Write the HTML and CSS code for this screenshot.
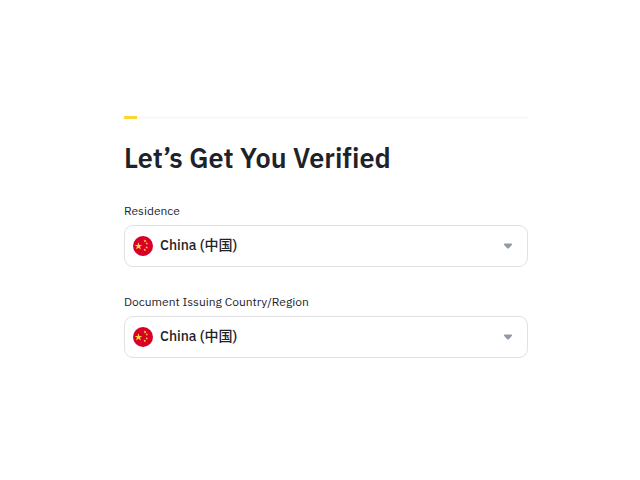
FILE: index.html
```
<!DOCTYPE html>
<html lang="en">
  <head>
    <meta charset="UTF-8" />
    <meta name="viewport" content="width=device-width, initial-scale=1" />
    <title>Let’s Get You Verified</title>
    <link rel="stylesheet" href="styles.css" />
  </head>
  <body>
    <!-- Flag, shared by both fields -->
    <svg class="sprite" width="0" height="0" aria-hidden="true">
      <symbol id="flag-cn" viewBox="0 0 20 20">
        <circle cx="10" cy="10" r="10" fill="#d80027" />
        <path fill="#ffda44" d="M5.500 6.200l.9 2.700h2.900L7 10.600l.9 2.800-2.400-1.700-2.400 1.700.9-2.800L1.700 8.900h2.900z" />
        <path fill="#ffda44" d="M11.200 15.100l-.1-1-.9-.4 1-.3.100-1 .6.800 1-.3-.5.900.6.800-1-.2zM12.900 12.500l.3-1-.8-.6h1l.3-1 .4 1h1l-.8.6.3 1-.9-.6zM14.800 8.400l-.9-.5-.8.700.2-1-.9-.5 1-.1.200-1 .5.900 1-.1-.7.7zM12.300 5.700l-.7.7-.1-1-.9-.4.9-.4.1-1 .7.700.9-.3-.4.900.500.900z" />
      </symbol>
    </svg>

    <main class="verify">
      <div class="progress" role="progressbar" aria-label="Progress" aria-valuemin="0" aria-valuemax="100" aria-valuenow="3">
        <div class="progress-bar"></div>
      </div>

      <h1>Let’s Get You Verified</h1>

      <form class="verify-form">
        <div class="field">
          <label for="residence">Residence</label>
          <div class="select-box">
            <svg class="flag" aria-hidden="true"><use href="#flag-cn" /></svg>
            <select id="residence" name="residence">
              <option value="CN" selected>China (中国)</option>
            </select>
            <svg class="arrow" viewBox="0 0 8 6" aria-hidden="true">
              <path d="M.6.5h6.800q.6 0 .6.600v.7L4.900 5.200q-.9.8-1.800 0L0 1.800v-.7Q0 .5.600.5z" />
            </svg>
          </div>
        </div>

        <div class="field">
          <label for="issuing-country">Document Issuing Country/Region</label>
          <div class="select-box">
            <svg class="flag" aria-hidden="true"><use href="#flag-cn" /></svg>
            <select id="issuing-country" name="issuing-country">
              <option value="CN" selected>China (中国)</option>
            </select>
            <svg class="arrow" viewBox="0 0 8 6" aria-hidden="true">
              <path d="M.6.5h6.800q.6 0 .6.600v.7L4.900 5.200q-.9.8-1.800 0L0 1.800v-.7Q0 .5.600.5z" />
            </svg>
          </div>
        </div>
      </form>
    </main>
  </body>
</html>
```
FILE: styles.css
```
/* Reset */
* {
  margin: 0;
  padding: 0;
  box-sizing: border-box;
}
body {
  background-color: #fff;
  color: #1e2329;
  font-family: "IBM Plex Sans", Roboto, "Noto Sans CJK SC", sans-serif;
}
.sprite {
  position: absolute;
}

.verify {
  padding: 116px 112px 40px 124px;
}

/* Progress */
.progress {
  height: 3px;
  background-color: #fafafa;
}
.progress-bar {
  width: 13px;
  height: 100%;
  background-color: #fcd535;
}

h1 {
  margin-top: 21px;
  font-size: 27px;
  line-height: 36px;
  font-weight: 600;
  font-variant-ligatures: none;
}

/* Fields */
.verify-form {
  display: flex;
  flex-direction: column;
  gap: 27px;
  margin-top: 27px;
}
.field {
  display: flex;
  flex-direction: column;
  gap: 6px;
}
label {
  font-size: 12px;
  line-height: 16px;
}
.select-box {
  display: flex;
  align-items: center;
  height: 42px;
  border: 1px solid #dfe1e6;
  border-radius: 9px;
}
.select-box:focus-within {
  border-color: #fcd535;
}
.flag {
  width: 20px;
  height: 20px;
  margin-left: 8px;
  flex-shrink: 0;
}
select {
  flex: 1;
  min-width: 0;
  height: 100%;
  padding: 0 0 2px 7px;
  border: none;
  outline: none;
  appearance: none;
  background: transparent;
  color: inherit;
  font-family: inherit;
  font-size: 14px;
  font-weight: 500;
  cursor: pointer;
}
.arrow {
  width: 8px;
  height: 6px;
  margin-right: 15px;
  flex-shrink: 0;
  fill: #929aa5;
  pointer-events: none;
}
```
